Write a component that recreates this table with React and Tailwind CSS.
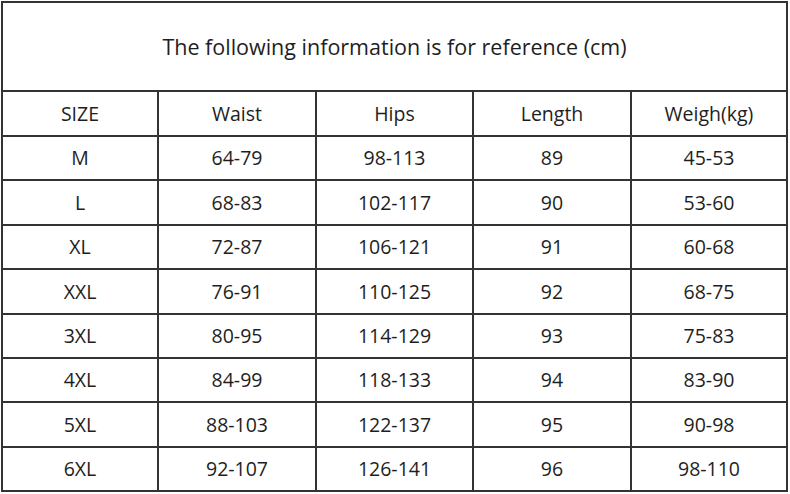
import React from "react";

const rows = [
  ["M", "64-79", "98-113", "89", "45-53"],
  ["L", "68-83", "102-117", "90", "53-60"],
  ["XL", "72-87", "106-121", "91", "60-68"],
  ["XXL", "76-91", "110-125", "92", "68-75"],
  ["3XL", "80-95", "114-129", "93", "75-83"],
  ["4XL", "84-99", "118-133", "94", "83-90"],
  ["5XL", "88-103", "122-137", "95", "90-98"],
  ["6XL", "92-107", "126-141", "96", "98-110"],
];

function Row({ cells, last, header }) {
  return (
    <div
      className={`grid grid-cols-[156px_158px_157px_158px_1fr] ${
        header ? "h-[45px]" : "flex-1"
      } ${last ? "" : "border-b-2 border-[#333]"}`}
    >
      {cells.map((c, i) => (
        <div
          key={i}
          className={`flex items-center justify-center ${
            i < 4 ? "border-r-2 border-[#333]" : ""
          }`}
        >
          {c}
        </div>
      ))}
    </div>
  );
}

export default function App() {
  return (
    <div className="w-[790px] h-[494px] bg-white pt-px pl-px">
      <div
        className="w-[787px] h-[491px] border-2 border-[#333] flex flex-col text-[#1e1e1e] text-[19.5px] leading-none"
        style={{ fontFamily: '"Open Sans", "Noto Sans", sans-serif' }}
      >
        <div className="h-[89px] border-b-2 border-[#333] flex items-center justify-center text-[21.5px]">
          The following information is for reference (cm)
        </div>
        <Row header cells={["SIZE", "Waist", "Hips", "Length", "Weigh(kg)"]} />
        {rows.map((r, i) => (
          <Row key={i} cells={r} last={i === rows.length - 1} />
        ))}
      </div>
    </div>
  );
}
